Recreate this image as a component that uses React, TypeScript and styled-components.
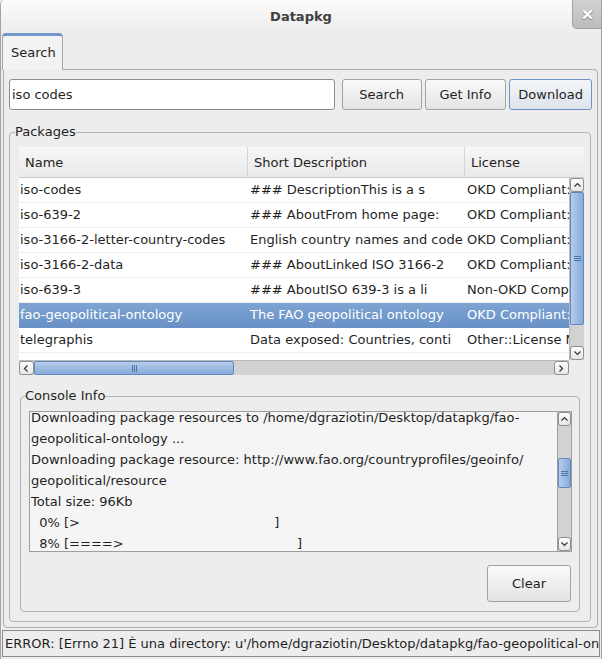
import React from 'react';
import styled, { createGlobalStyle } from 'styled-components';

const Global = createGlobalStyle`
  html, body { margin: 0; padding: 0; background: #ededed; }
  body { font-family: "DejaVu Sans", sans-serif; }
  * { box-sizing: border-box; }
`;

const FONT = '13px';

const Window = styled.div`
  width: 602px;
  height: 659px;
  background: #ededed;
  border-left: 1px solid #a3a3a3;
  border-right: 1px solid #a3a3a3;
  border-top-left-radius: 5px;
  display: flex;
  flex-direction: column;
  overflow: hidden;
  font-family: "DejaVu Sans", sans-serif;
  font-size: ${FONT};
  color: #1f1f1f;
`;

const TitleBar = styled.div`
  height: 33px;
  flex: 0 0 33px;
  display: grid;
  grid-template-columns: 29px 1fr 29px;
  align-items: start;
  background: linear-gradient(#fbfbfb, #ededed);
`;

const Title = styled.div`
  grid-column: 2;
  text-align: center;
  font-weight: bold;
  font-size: 13px;
  line-height: 33px;
  color: #404040;
`;

const CloseBtn = styled.div`
  grid-column: 3;
  height: 29px;
  display: flex;
  align-items: center;
  justify-content: center;
  background: linear-gradient(#d2d2d2, #bcbcbc);
  border-left: 1px solid #a2a2a2;
  border-bottom: 1px solid #a2a2a2;
  border-bottom-left-radius: 5px;
`;

const TabStrip = styled.div`
  height: 36px;
  flex: 0 0 36px;
  display: flex;
  padding-left: 1px;
  position: relative;
  z-index: 1;
`;

const Tab = styled.div`
  width: 61px;
  height: 37px;
  background: #f3f3f3;
  border: 1px solid #a9a9a9;
  border-top: 3px solid #7197cb;
  border-bottom: none;
  border-radius: 4px 4px 0 0;
  padding-left: 8px;
  line-height: 33px;
`;

const TabPanel = styled.div`
  flex: 1;
  margin: 0 3px 2px 2px;
  border: 1px solid #ababab;
  border-radius: 0 4px 4px 4px;
  padding: 9px 5px 0 5px;
  display: flex;
  flex-direction: column;
`;

const SearchRow = styled.div`
  display: flex;
  height: 31px;
  align-items: stretch;
`;

const Input = styled.div`
  width: 327px;
  border: 1px solid #8c8c8c;
  border-radius: 3px;
  background: #fff;
  padding-left: 2px;
  display: flex;
  align-items: center;
  margin-right: 7px;
`;

const Button = styled.div<{ $w: number; $focus?: boolean; $gap?: number }>`
  width: ${(p) => p.$w}px;
  margin-left: ${(p) => p.$gap ?? 0}px;
  display: flex;
  align-items: center;
  justify-content: center;
  border: 1px solid ${(p) => (p.$focus ? '#6e92c6' : '#a3a3a3')};
  border-radius: 3px;
  background: ${(p) =>
    p.$focus
      ? 'linear-gradient(#f4f6f9, #dde3ea)'
      : 'linear-gradient(#fafafa, #e3e3e3)'};
  color: #1f1f1f;
`;

const Group = styled.fieldset<{ $ml?: number; $mr?: number; $mt?: number }>`
  margin: ${(p) => p.$mt ?? 0}px ${(p) => p.$mr ?? 0}px 0 ${(p) => p.$ml ?? 0}px;
  border: 1px solid #b3b3b3;
  border-radius: 4px;
  min-width: 0;
`;

const PackagesGroup = styled(Group)`
  padding: 7px 6px 9px 9px;
  flex: 0 0 auto;
`;

const ConsoleGroup = styled(Group)`
  padding: 7px 7px 9px 8px;
`;

const Legend = styled.legend`
  padding: 0;
  margin-left: -4px;
  line-height: 16px;
  font-size: ${FONT};
`;

const TableFrame = styled.div`
  display: grid;
  grid-template-columns: 1fr 15px;
  grid-template-rows: 31px 182px 15px;
  height: 228px;
`;

const Header = styled.div`
  grid-column: 1 / 3;
  display: grid;
  grid-template-columns: 229px 217px 1fr;
  background: linear-gradient(#f7f7f7, #e9e9e9);
  border-bottom: 1px solid #c9c9c9;
`;

const HeadCell = styled.div<{ $last?: boolean }>`
  padding-left: 6px;
  padding-top: 1px;
  display: flex;
  align-items: center;
  border-right: ${(p) => (p.$last ? 'none' : '1px solid #d4d4d4')};
  white-space: nowrap;
  overflow: hidden;
`;

const Body = styled.div`
  background: #fff;
  overflow: hidden;
`;

const Row = styled.div<{ $sel?: boolean }>`
  display: grid;
  grid-template-columns: 229px 217px 160px;
  height: 25px;
  border-bottom: 1px solid ${(p) => (p.$sel ? '#6a92c7' : '#efefef')};
  background: ${(p) => (p.$sel ? 'linear-gradient(#7ea4d3, #6991c6)' : '#fff')};
  color: ${(p) => (p.$sel ? '#fff' : '#1f1f1f')};
`;

const Cell = styled.div`
  padding-left: 1px;
  line-height: 24px;
  white-space: nowrap;
  overflow: hidden;
`;

const LicCell = styled(Cell)`
  padding-left: 2px;
`;

const VScroll = styled.div`
  display: flex;
  flex-direction: column;
  background: #d2d2d2;
  border-left: 1px solid #b9b9b9;
`;

const HScroll = styled.div`
  display: flex;
  flex-direction: row;
  background: #d2d2d2;
  border-top: 1px solid #b9b9b9;
`;

const Corner = styled.div`
  background: #ededed;
`;

const Arrow = styled.div<{ $h?: boolean }>`
  flex: 0 0 ${(p) => (p.$h ? '15px' : '14px')};
  display: flex;
  align-items: center;
  justify-content: center;
  background: linear-gradient(#fdfdfd, #e6e6e6);
  border: 1px solid #8f8f8f;
  border-radius: 3px;
`;

const VTrack = styled.div`
  flex: 1;
  display: flex;
  flex-direction: column;
`;

const HTrack = styled.div`
  flex: 1;
  display: flex;
  flex-direction: row;
`;

const VThumb = styled.div<{ $start: number; $size: number }>`
  margin-top: ${(p) => p.$start}px;
  height: ${(p) => p.$size}px;
  background: linear-gradient(to right, #b7cdea, #87a9d9);
  border: 1px solid #6189bf;
  border-radius: 2px;
  display: flex;
  align-items: center;
  justify-content: center;
`;

const HThumb = styled.div<{ $start: number; $size: number }>`
  margin-left: ${(p) => p.$start}px;
  width: ${(p) => p.$size}px;
  background: linear-gradient(#b7cdea, #87a9d9);
  border: 1px solid #6189bf;
  border-radius: 2px;
  display: flex;
  align-items: center;
  justify-content: center;
`;

const ConsoleFrame = styled.div`
  display: grid;
  grid-template-columns: 1fr 14px;
  height: 141px;
  border: 1px solid #9d9d9d;
  background: #f5f5f5;
`;

const ConsoleText = styled.div`
  overflow: hidden;
  padding-left: 1px;
`;

const ConsoleLines = styled.div`
  margin-top: -5px;
`;

const Line = styled.div`
  line-height: 21px;
  white-space: pre;
`;

const ConsoleVScroll = styled(VScroll)`
  border-left: 1px solid #9d9d9d;
`;

const ClearRow = styled.div`
  display: flex;
  justify-content: flex-end;
  margin-top: 13px;
  padding-right: 1px;
`;

const ClearButton = styled(Button)`
  height: 37px;
`;

const StatusBar = styled.div`
  height: 27px;
  flex: 0 0 27px;
  margin: 0 1px 2px 1px;
  border: 1px solid #8b8b8b;
  padding-left: 2px;
  display: flex;
  align-items: center;
  white-space: nowrap;
  overflow: hidden;
`;

const Chevron = ({ dir }: { dir: 'up' | 'down' | 'left' | 'right' }) => {
  const pts: Record<string, string> = {
    up: '1.5,5.5 4.5,2.5 7.5,5.5',
    down: '1.5,2.5 4.5,5.5 7.5,2.5',
    left: '5.5,1.5 2.5,4.5 5.5,7.5',
    right: '2.5,1.5 5.5,4.5 2.5,7.5',
  };
  return (
    <svg width="9" height="9" viewBox="0 0 9 9">
      <polyline points={pts[dir]} fill="none" stroke="#333" strokeWidth="1.2" />
    </svg>
  );
};

const VGrip = () => (
  <svg width="7" height="7" viewBox="0 0 7 7">
    <path d="M0 1.5h7M0 3.5h7M0 5.5h7" stroke="#4f76ac" strokeWidth="1" />
  </svg>
);

const HGrip = () => (
  <svg width="7" height="7" viewBox="0 0 7 7">
    <path d="M1.5 0v7M3.5 0v7M5.5 0v7" stroke="#4f76ac" strokeWidth="1" />
  </svg>
);

const CloseIcon = () => (
  <svg width="11" height="11" viewBox="0 0 11 11">
    <path d="M2 2L9 9M9 2L2 9" stroke="#8a8a8a" strokeWidth="3" strokeLinecap="round" transform="translate(0,0.6)" />
    <path d="M2 2L9 9M9 2L2 9" stroke="#ffffff" strokeWidth="2.4" strokeLinecap="round" />
  </svg>
);

const rows: [string, string, string][] = [
  ['iso-codes', '### DescriptionThis is a s', 'OKD Compliant::Open'],
  ['iso-639-2', '### AboutFrom home page:', 'OKD Compliant::Open'],
  ['iso-3166-2-letter-country-codes', 'English country names and code', 'OKD Compliant::Open'],
  ['iso-3166-2-data', '### AboutLinked ISO 3166-2', 'OKD Compliant::Open'],
  ['iso-639-3', '### AboutISO 639-3 is a li', 'Non-OKD Compliant::Other'],
  ['fao-geopolitical-ontology', 'The FAO geopolitical ontology', 'OKD Compliant::Open'],
  ['telegraphis', 'Data exposed: Countries, conti', 'Other::License Not Specified'],
];

const consoleLines = [
  'Downloading package resources to /home/dgraziotin/Desktop/datapkg/fao-',
  'geopolitical-ontology ...',
  'Downloading package resource: http://www.fao.org/countryprofiles/geoinfo/',
  'geopolitical/resource',
  'Total size: 96Kb',
  '  0% [>' + ' '.repeat(47) + ']',
  '  8% [====>' + ' '.repeat(42) + ']',
];

export default function App() {
  return (
    <>
      <Global />
      <Window>
        <TitleBar>
          <Title>Datapkg</Title>
          <CloseBtn>
            <CloseIcon />
          </CloseBtn>
        </TitleBar>
        <TabStrip>
          <Tab>Search</Tab>
        </TabStrip>
        <TabPanel>
          <SearchRow>
            <Input>iso codes</Input>
            <Button $w={80}>Search</Button>
            <Button $w={82} $gap={3}>Get Info</Button>
            <Button $w={83} $gap={3} $focus>Download</Button>
          </SearchRow>
          <PackagesGroup $mt={14} $mr={1}>
            <Legend>Packages</Legend>
            <TableFrame>
              <Header>
                <HeadCell>Name</HeadCell>
                <HeadCell>Short Description</HeadCell>
                <HeadCell $last>License</HeadCell>
              </Header>
              <Body>
                {rows.map((r, i) => (
                  <Row key={r[0]} $sel={i === 5}>
                    <Cell>{r[0]}</Cell>
                    <LicCell>{r[1]}</LicCell>
                    <LicCell>{r[2]}</LicCell>
                  </Row>
                ))}
              </Body>
              <VScroll>
                <Arrow>
                  <Chevron dir="up" />
                </Arrow>
                <VTrack>
                  <VThumb $start={0} $size={133}>
                    <VGrip />
                  </VThumb>
                </VTrack>
                <Arrow>
                  <Chevron dir="down" />
                </Arrow>
              </VScroll>
              <HScroll>
                <Arrow $h>
                  <Chevron dir="left" />
                </Arrow>
                <HTrack>
                  <HThumb $start={0} $size={200}>
                    <HGrip />
                  </HThumb>
                </HTrack>
                <Arrow $h>
                  <Chevron dir="right" />
                </Arrow>
              </HScroll>
              <Corner />
            </TableFrame>
            <ConsoleGroup $mt={13} $ml={1} $mr={4}>
              <Legend>Console Info</Legend>
              <ConsoleFrame>
                <ConsoleText>
                  <ConsoleLines>
                    {consoleLines.map((l, i) => (
                      <Line key={i}>{l}</Line>
                    ))}
                  </ConsoleLines>
                </ConsoleText>
                <ConsoleVScroll>
                  <Arrow>
                    <Chevron dir="up" />
                  </Arrow>
                  <VTrack>
                    <VThumb $start={32} $size={30}>
                      <VGrip />
                    </VThumb>
                  </VTrack>
                  <Arrow>
                    <Chevron dir="down" />
                  </Arrow>
                </ConsoleVScroll>
              </ConsoleFrame>
              <ClearRow>
                <ClearButton $w={84}>Clear</ClearButton>
              </ClearRow>
            </ConsoleGroup>
          </PackagesGroup>
        </TabPanel>
        <StatusBar>
          ERROR: [Errno 21] È una directory: u'/home/dgraziotin/Desktop/datapkg/fao-geopolitical-ontology/geopolitical'
        </StatusBar>
      </Window>
    </>
  );
}
